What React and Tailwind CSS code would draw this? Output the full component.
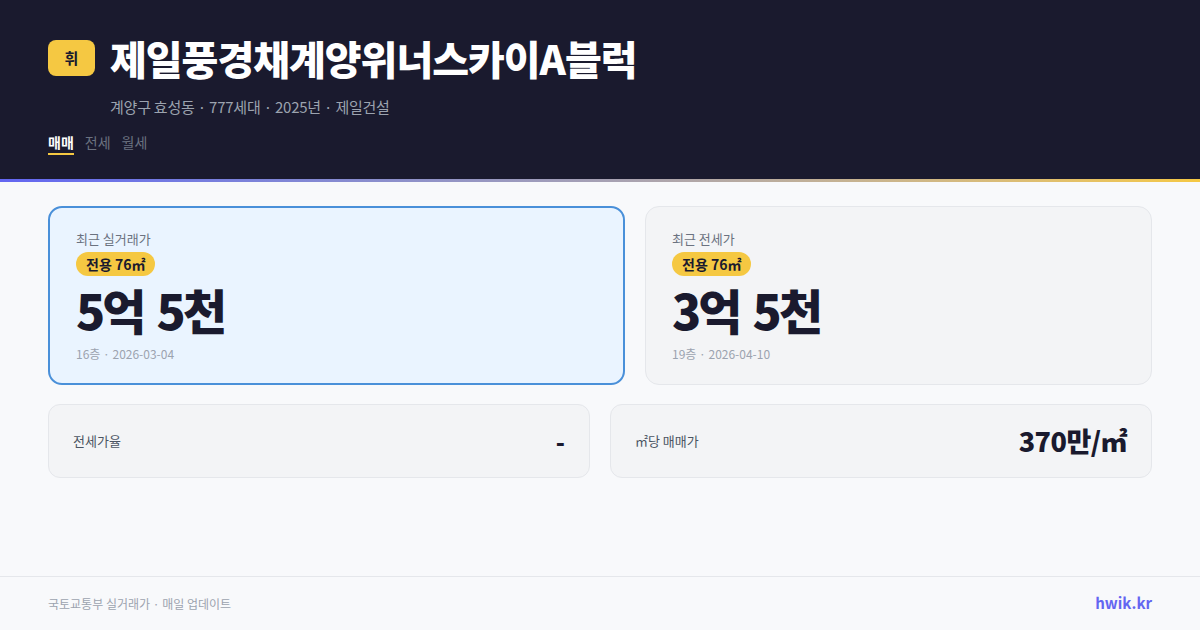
export default function App() {
  const font = { fontFamily: '"Noto Sans CJK KR", "Noto Sans", sans-serif' };
  return (
    <div className="flex h-[630px] w-[1200px] flex-col bg-[#f8f9fb]" style={font}>
      <header className="h-[179px] bg-[#1a1a2e] px-12 pt-[35px]">
        <div className="flex items-center gap-[15px]">
          <div className="flex h-[36px] w-[47px] items-center justify-center rounded-[8px] bg-[#f5c842] text-[15px] font-bold text-[#1a1a2e]">
            휘
          </div>
          <h1 className="text-[40px] font-extrabold leading-[46px] tracking-[-0.025em] text-white">
            제일풍경채계양위너스카이A블럭
          </h1>
        </div>
        <p className="mt-[16px] pl-[62px] text-[15px] leading-[20px] tracking-[-0.015em] text-[#9ca3af]">
          계양구 효성동 · 777세대 · 2025년 · 제일건설
        </p>
        <nav className="mt-[15px] flex gap-[11px] text-[14px] leading-[20px]">
          <span className="border-b-2 border-[#f5c842] pb-[1px] font-bold text-white">매매</span>
          <span className="text-[#6b7280]">전세</span>
          <span className="text-[#6b7280]">월세</span>
        </nav>
      </header>
      <div className="h-[3px] bg-gradient-to-r from-[#6366f1] to-[#f5c842]" />
      <main className="px-12 pt-[24px]">
        <div className="flex gap-5">
          <PriceCard
            active
            label="최근 실거래가"
            price="5억 5천"
            meta="16층 · 2026-03-04"
          />
          <PriceCard label="최근 전세가" price="3억 5천" meta="19층 · 2026-04-10" />
        </div>
        <div className="mt-[19px] grid grid-cols-2 gap-5">
          <div className="flex h-[74px] items-center justify-between rounded-[12px] border border-[#e5e7eb] bg-[#f3f4f6] px-6">
            <span className="text-[13px] text-[#4b5563]">전세가율</span>
            <span className="text-[24px] font-extrabold text-[#1a1a2e]">-</span>
          </div>
          <div className="flex h-[74px] items-center justify-between rounded-[12px] border border-[#e5e7eb] bg-[#f3f4f6] px-6">
            <span className="text-[13px] text-[#4b5563]">㎡당 매매가</span>
            <span className="text-[27px] font-extrabold tracking-[-0.02em] text-[#1a1a2e]">370만/㎡</span>
          </div>
        </div>
      </main>
      <footer className="mt-auto flex h-[54px] items-center justify-between border-t border-[#e5e7eb] px-12">
        <span className="text-[12px] text-[#9ca3af]">국토교통부 실거래가 · 매일 업데이트</span>
        <span className="text-[15px] font-bold text-[#6366f1]">hwik.kr</span>
      </footer>
    </div>
  );
}

function PriceCard({ active, label, price, meta }) {
  return (
    <div
      className={
        active
          ? 'h-[179px] w-[577px] rounded-[14px] border-2 border-[#4a90d9] bg-[#eaf4ff] px-[26px] pt-[22px]'
          : 'h-[179px] flex-1 rounded-[14px] border border-[#e5e7eb] bg-[#f3f4f6] px-[26px] pt-[23px]'
      }
    >
      <div className="text-[13px] leading-[18px] text-[#6b7280]">{label}</div>
      <div className="mt-[4px] inline-flex h-[24px] items-center rounded-full bg-[#f5c842] px-[10px] text-[14px] font-bold text-[#1a1a2e]">
        전용 76㎡
      </div>
      <div className="mt-[4px] text-[48px] font-black leading-[58px] tracking-[-0.06em] text-[#1a1a2e] [word-spacing:0.1em]">
        {price}
      </div>
      <div className="mt-[8px] text-[12px] leading-[16px] text-[#9ca3af]">{meta}</div>
    </div>
  );
}
